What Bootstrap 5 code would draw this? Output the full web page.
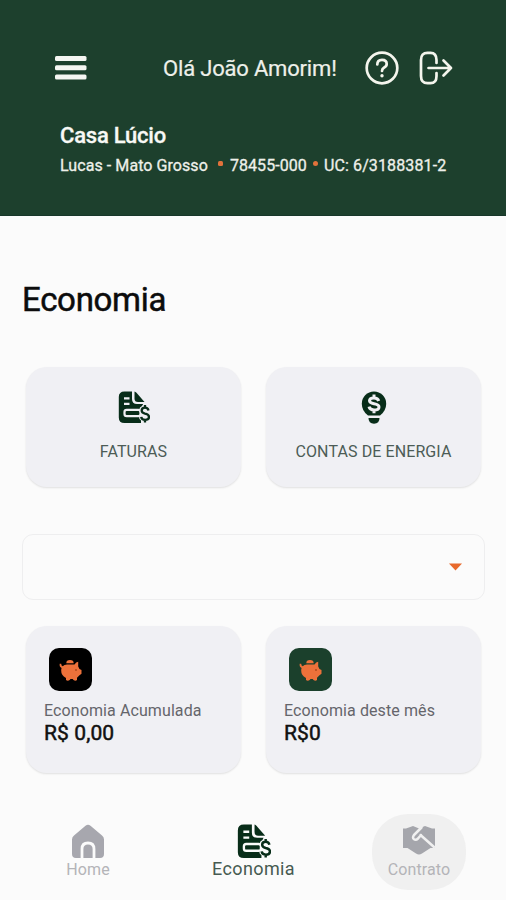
<!DOCTYPE html>
<html lang="pt-BR">
<head>
<meta charset="utf-8">
<meta name="viewport" content="width=device-width, initial-scale=1">
<title>Economia</title>
<link href="https://cdn.jsdelivr.net/npm/bootstrap@5.3.0/dist/css/bootstrap.min.css" rel="stylesheet">
<style>
  body { font-family: Roboto, "Liberation Sans", sans-serif; background: #fbfbfb; color: #111; }
  svg { display: block; flex: none; }
  .screen { width: 506px; height: 900px; overflow: hidden; }
  .topbar { background: #1d402d; color: #eef0ea; height: 216px; padding: 50px 53px 0 55px; border-bottom: 1px solid #18372a; }
  .topbar-row { height: 36px; }
  .greeting { font-size: 22px; line-height: 36px; width: 174px; margin-left: 76px; padding-top: 1px; letter-spacing: -.18px; -webkit-text-stroke: .2px; }
  .exit-icon { margin-left: 20px; }
  .place { font-size: 22px; line-height: 28px; margin: 36px 0 0 5px; font-weight: 500; letter-spacing: -.22px; -webkit-text-stroke: .3px; color: #f8f9f5; }
  .details { font-size: 16px; line-height: 24px; margin: 4px 0 0 5px; letter-spacing: .07px; -webkit-text-stroke: .3px; }
  .unit-code { letter-spacing: .12px; }
  .dot { width: 5px; height: 5px; background: #e2723b; border-radius: 1.5px; margin-bottom: 5px; }
  .dot-wide { margin-left: 10px; margin-right: 7px; }
  .dot-round { border-radius: 50%; margin-left: 6px; margin-right: 6px; }
  .title { font-size: 33px; line-height: 40px; margin: 64px 0 0 22px; font-weight: 400; letter-spacing: -.3px; color: #0c0c0c; -webkit-text-stroke: .5px; }
  .tiles { padding: 0 25px 0 26px; gap: 25px; }
  .tiles-actions { margin-top: 47px; }
  .tiles-values { margin-top: 26px; }
  .tile { flex: 1 1 0; background: #f0f0f4; border-radius: 21px; box-shadow: 0 1px 2px rgba(0,0,0,.11); --tile: #f0f0f4; }
  .tile-action { height: 120px; padding-top: 24px; }
  .tile-action span { font-size: 16px; line-height: 20px; color: #4c5c56; margin-top: 19px; letter-spacing: .1px; }
  .tile-action svg + .label-long { margin-top: 18px; }
  .picker { height: 66px; margin: 47px 21px 0 22px; border: 1px solid #eeeeef; border-radius: 11px; padding-right: 22px; }
  .tile-value { height: 147px; padding: 22px 17px 0 18px; }
  .badge-icon { width: 43px; height: 43px; border-radius: 10px; background: #000; margin-left: 5px; }
  .badge-green { background: #1b402c; }
  .caption-text { font-size: 16px; line-height: 20px; margin-top: 10px; letter-spacing: .1px; color: #65656b; }
  .amount { font-size: 21px; line-height: 26px; margin-top: -1px; color: #111; letter-spacing: .1px; -webkit-text-stroke: .5px; }
  .bottom { margin-top: 41px; padding: 0 40px 0 41px; height: 76px; }
  .tab { width: 94px; height: 76px; border-radius: 36px; color: #b4b4b8; font-size: 16px; line-height: 20px; padding-top: 10px; letter-spacing: .1px; --tile: #fbfbfb; }
  .tab svg { margin-bottom: 2px; }
  .tab-current { color: #465a51; font-size: 18px; letter-spacing: .4px; }
  .tab-current svg { margin-bottom: 1px; }
  .tab-pressed { background: #f0f0f0; --tile: #f0f0f0; }
</style>
<script src="https://cdn.jsdelivr.net/npm/bootstrap@5.3.0/dist/js/bootstrap.bundle.min.js"></script>
</head>
<body>
<svg width="0" height="0" class="position-absolute" aria-hidden="true">
  <symbol id="bill" viewBox="0 0 32 32">
    <path fill="#082d19" d="M6.500 .5h7.500v7.500q0 5 5 5H25v19H6.500q-5.700 0-5.700-5.500V6Q.8.500 6.500.5z"/>
    <path fill="#082d19" d="M16.500 .5q1 .2 2 1.300l8 9.200H20q-3.500 0-3.500-3.500z"/>
    <path stroke="var(--tile)" stroke-width="2.300" d="M6 7.300h5.500M6 12.800h5.500"/>
    <rect x="6.500" y="18.800" width="16" height="6.400" rx="2.200" fill="#082d19" stroke="var(--tile)" stroke-width="2.200"/>
    <path fill="var(--tile)" d="M25.500 12.500q-1 2.500-3.500 4-1.500 3 .5 6.500-2 2.500-1 5l1.500 1.500V33H33V12.500z"/>
    <path fill="none" stroke="#082d19" stroke-width="2.300" d="M30.500 19.500q-.6-2.800-3.500-2.800-3.300 0-3.300 2.800 0 2.300 3.300 3.100 4 .8 4 3.300 0 2.900-3.800 2.900-3.700 0-4-3M27 14V17M27 28.500v3"/>
  </symbol>
  <symbol id="pig" viewBox="0 0 24 24">
    <path fill="#ed713a" d="M2.200 5.800Q2.200 8 3.800 8.200 5 6.700 8 6.500h7.500q1.500-2.700 3.700-2.700v4.700l1.300 2.500 2 1v3.800l-2.300 1.700-2.200 2.200V22q-1.500 1.500-3.500 0l-.8-1h-2.200l-.8 1q-2 1.500-3.700 0v-2Q2 17 2.200 12.500q0-1.500.4-2.500Q.2 9 .7 5.800z"/>
    <path fill="#ed713a" d="M7.300 5.300Q7.300 2 11 2t3.700 3.300z"/>
    <circle cx="17" cy="12" r=".9" fill="#a8461c"/>
  </symbol>
</svg>

<div class="screen d-flex flex-column">
  <header class="topbar">
    <div class="topbar-row d-flex align-items-center">
      <svg width="32" height="26" viewBox="0 0 32 26"><g fill="#f5f6f2"><rect y="1" width="31.500" height="5" rx="1.500"/><rect y="10.200" width="31.500" height="5" rx="1.500"/><rect y="19.500" width="31.500" height="5" rx="1.500"/></g></svg>
      <div class="greeting text-nowrap">Olá João Amorim!</div>
      <svg class="ms-auto" width="34" height="34" viewBox="0 0 34 34" fill="none" stroke="#f4f5ed" stroke-width="2.700"><circle cx="17" cy="17" r="15.300"/><path stroke-linecap="round" d="M12.300 13.500q0-4.700 4.700-4.700t4.700 4.200q0 2.200-2.500 3.500Q17 17.700 17 20"/><circle cx="17" cy="24.800" r="1.700" fill="#f4f5ed" stroke="none"/></svg>
      <svg class="exit-icon" width="34" height="34" viewBox="0 0 34 34" fill="none" stroke="#f4f5ed" stroke-width="2.700" stroke-linecap="round" stroke-linejoin="round"><path d="M17.500 12V9q0-7.200-6-7.200H8.500Q2 1.800 2 9v16q0 7.200 6.500 7.200h3q6 0 6-7.200V22M9.500 17H32M24.500 9.500L32 17l-7.500 7.500"/></svg>
    </div>
    <div class="place text-nowrap">Casa Lúcio</div>
    <div class="details d-flex align-items-center text-nowrap">
      <span>Lucas - Mato Grosso</span><i class="dot dot-wide"></i><span>78455-000</span><i class="dot dot-round"></i><span class="unit-code">UC: 6/3188381-2</span>
    </div>
  </header>

  <h1 class="title mb-0">Economia</h1>

  <div class="tiles tiles-actions d-flex">
    <div class="tile tile-action d-flex flex-column align-items-center">
      <svg width="32" height="32"><use href="#bill"/></svg><span>FATURAS</span>
    </div>
    <div class="tile tile-action d-flex flex-column align-items-center">
      <svg width="26" height="33" viewBox="0 0 26 33"><g fill="#082d19"><path d="M13 .5a12.200 12.200 0 0 1 12.200 12.200q0 7-6.200 11.800H7Q.8 19.700.8 12.700A12.200 12.200 0 0 1 13 .5z"/><path d="M7.500 27h11q0 5.700-5.500 5.700T7.500 27z"/></g><path fill="none" stroke="#f0f0f4" stroke-width="3" d="M17.700 10q-.8-3-4.700-3-4.500 0-4.500 2.800 0 2.200 4.500 3 5 .8 5 3.200 0 3-5 3-4.200 0-5-3.300M13 3.500V7M13 19v3.300"/></svg>
      <span class="label-long text-nowrap">CONTAS DE ENERGIA</span>
    </div>
  </div>

  <div class="picker d-flex align-items-center justify-content-end">
    <svg width="13" height="8" viewBox="0 0 13 8"><path fill="#e8692c" d="M0 .5h13L6.500 7.500z"/></svg>
  </div>

  <div class="tiles tiles-values d-flex">
    <div class="tile tile-value">
      <div class="badge-icon d-flex align-items-center justify-content-center"><svg width="24" height="24"><use href="#pig"/></svg></div>
      <div class="caption-text text-nowrap">Economia Acumulada</div>
      <div class="amount">R$ 0,00</div>
    </div>
    <div class="tile tile-value">
      <div class="badge-icon badge-green d-flex align-items-center justify-content-center"><svg width="24" height="24"><use href="#pig"/></svg></div>
      <div class="caption-text text-nowrap">Economia deste mês</div>
      <div class="amount">R$0</div>
    </div>
  </div>

  <nav class="bottom d-flex justify-content-between">
    <div class="tab d-flex flex-column align-items-center">
      <svg width="34" height="34" viewBox="0 0 34 34"><path fill="#a7a7ae" d="M14.500 1.700q2.500-1.700 5 0L31 11.500q2 1.600 2 4V30q0 4-4 4H5q-4 0-4-4V15.500q0-2.400 2-4z"/><path fill="#a7a7ae" stroke="#fbfbfb" stroke-width="2.800" d="M11 35V25q0-6 6-6t6 6v10"/></svg>
      <span>Home</span>
    </div>
    <div class="tab tab-current d-flex flex-column align-items-center">
      <svg width="34" height="34"><use href="#bill"/></svg><span>Economia</span>
    </div>
    <div class="tab tab-pressed d-flex flex-column align-items-center">
      <svg width="34" height="34" viewBox="0 0 34 34"><path fill="#a5a6ac" d="M1 4.500h3L11 2l6 2.500L23 2l7 2.500h3V24h-4.500L20 29.500q-3 2-6 0L5.500 24H1z"/><path fill="none" stroke="#f0f0f0" stroke-width="2.500" stroke-linecap="round" stroke-linejoin="round" d="M19.500 3.500l-7.500 7.500q-2 3 0 4.300 2 1.200 4-.8l3-3.500M18.500 11L32 23"/></svg>
      <span>Contrato</span>
    </div>
  </nav>
</div>
</body>
</html>
